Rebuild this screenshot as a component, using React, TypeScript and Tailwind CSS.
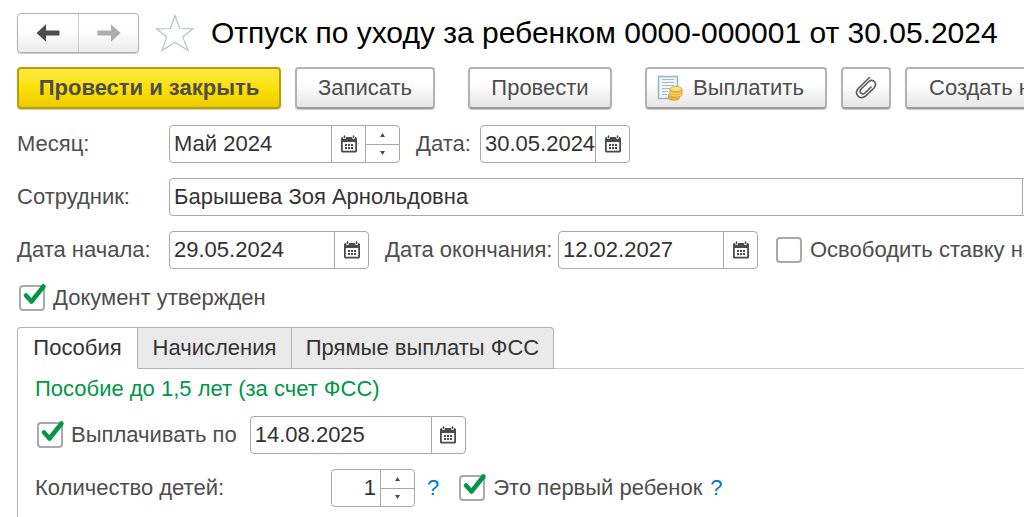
import { useId, useState } from 'react';
import type { ReactNode } from 'react';
import clsx from 'clsx';

const tabs = [
  { label: 'Пособия', width: 'w-[121px]' },
  { label: 'Начисления', width: 'w-[154px]' },
  { label: 'Прямые выплаты ФСС', width: 'w-[262px]' },
];

function ArrowIcon({ className }: { className?: string }) {
  return (
    <svg width="24" height="20" viewBox="0 0 24 20" fill="currentColor" className={className} aria-hidden="true">
      <path d="M0.5 10 10 1.2v6.300h13.500v5H10v6.300z" />
    </svg>
  );
}

function StarIcon() {
  return (
    <svg width="40" height="38" viewBox="0 0 40 38" fill="#fff" stroke="#b9c0c6" strokeWidth="1.2" aria-hidden="true">
      <path d="M20 1.5 24.7 14.5 38 14.8 27.6 23 33.2 36.5 20 28.2 7 36.5 11.6 23 1.5 14.8 15.3 14.5z" />
    </svg>
  );
}

function CalendarIcon() {
  return (
    <svg width="16" height="18" viewBox="0 0 16 18" className="shrink-0" aria-hidden="true">
      <path
        fill="#4a4a4a"
        fillRule="evenodd"
        d="M1.500 2h13a1.500 1.500 0 0 1 1.500 1.500V16a1.500 1.500 0 0 1-1.500 1.500h-13A1.500 1.500 0 0 1 0 16V3.500A1.500 1.500 0 0 1 1.500 2zM1.800 7v8.800h12.400V7z"
      />
      <path stroke="#fff" strokeWidth="3.200" strokeLinecap="round" d="M3.500 1v1.500M12.500 1v1.500" />
      <path stroke="#4a4a4a" strokeWidth="1.600" strokeLinecap="round" d="M3.500 1v1.500M12.500 1v1.500" />
      <path
        fill="#4a4a4a"
        d="M4 9h2v2H4zM7 9h2v2H7zM10 9h2v2h-2zM4 12h2v2H4zM7 12h2v2H7zM10 12h2v2h-2z"
      />
    </svg>
  );
}

function PayIcon() {
  return (
    <svg width="26" height="26" viewBox="0 0 26 26" aria-hidden="true">
      <path fill="#eff5f9" stroke="#94b5cc" strokeWidth="1.600" d="M1.500 1.500h19v22h-19z" />
      <path stroke="#a5b8c6" d="M5 4.500h12M5 7.500h12M5 10.500h12M5 13.500h8M5 16.500h6M5 19.500h5" />
      <g stroke="#d6a02e" strokeWidth="0.800">
        <path fill="#e9ae35" d="M11.500 20.500v2.500c0 3 11 3 11 0v-2.500z" />
        <ellipse cx="17" cy="20" rx="5.500" ry="2.200" fill="#ffd866" />
        <path fill="#edb53c" d="M13 14v5.500c0 3.500 12 3.500 12 0V14z" />
        <path fill="none" stroke="#ffe48a" d="M13.500 16.500c0 2.800 11 2.800 11 0M13.500 19c0 2.800 11 2.800 11 0" />
        <ellipse cx="19" cy="14" rx="6" ry="2.600" fill="#ffe078" />
      </g>
    </svg>
  );
}

function ClipIcon() {
  return (
    <svg
      width="22"
      height="24"
      viewBox="0 0 22 24"
      fill="none"
      stroke="#5a5a5a"
      strokeWidth="1.600"
      strokeLinecap="round"
      aria-hidden="true"
    >
      <path d="M14.500 1.500 3.200 12.500C-1 17 4 24.500 10 20.500L19 12c4-5-1-9.500-5-6.500L6.500 12.500c-3.500 3.500.5 7 3.500 4.500l6-6" />
    </svg>
  );
}

function ToolButton({ children, className, label }: { children: ReactNode; className?: string; label?: string }) {
  return (
    <button
      type="button"
      aria-label={label}
      className={clsx(
        'flex h-[42px] shrink-0 items-center rounded border-2 shadow-[0_1px_1px_#c8c8c8]',
        className,
      )}
    >
      {children}
    </button>
  );
}

const plainButton = 'border-[#b2b2b2] border-b-[#9b9b9b] bg-linear-to-b from-white from-40% to-[#e6e6e6] text-[#4d4d4d]';

type FieldProps = {
  id: string;
  value: string;
  className: string;
  calendar?: boolean;
  spinner?: boolean;
  picker?: boolean;
  alignRight?: boolean;
};

function Field({ id, value, className, calendar, spinner, picker, alignRight }: FieldProps) {
  const [text, setText] = useState(value);

  return (
    <div className={clsx('flex h-[38px] overflow-hidden rounded border border-[#a8a8a8] bg-white', className)}>
      <input
        id={id}
        type="text"
        value={text}
        onChange={(e) => setText(e.target.value)}
        className={clsx('w-0 min-w-0 flex-1 pl-1 text-[#333] outline-none', alignRight && 'pr-1 text-right')}
      />
      {calendar && (
        <button
          type="button"
          aria-label="Выбрать дату"
          className="flex w-[34px] items-center justify-center border-l border-[#a8a8a8]"
        >
          <CalendarIcon />
        </button>
      )}
      {spinner && (
        <div className="flex w-[34px] flex-col border-l border-[#a8a8a8]">
          <button
            type="button"
            aria-label="Увеличить"
            className="flex flex-1 items-center justify-center border-b border-[#a8a8a8]"
          >
            <svg width="5" height="4" viewBox="0 0 5 4" fill="#4a4a4a"><path d="M2.500 0 5 4H0z" /></svg>
          </button>
          <button type="button" aria-label="Уменьшить" className="flex flex-1 items-center justify-center">
            <svg width="5" height="4" viewBox="0 0 5 4" fill="#4a4a4a"><path d="M0 0h5L2.500 4z" /></svg>
          </button>
        </div>
      )}
      {picker && <button type="button" aria-label="Выбрать" className="w-[34px] border-l border-[#a8a8a8]" />}
    </div>
  );
}

function Checkbox({ label, checked = false }: { label: string; checked?: boolean }) {
  const id = useId();

  return (
    <div className="flex shrink-0 items-center gap-2 pl-0.5">
      <span className="relative flex">
        <input
          id={id}
          type="checkbox"
          defaultChecked={checked}
          className="peer size-[26px] appearance-none rounded border-2 border-[#a9a9a9] bg-white"
        />
        <svg
          width="30"
          height="26"
          viewBox="0 0 30 26"
          fill="none"
          stroke="#009646"
          strokeWidth="4.500"
          strokeLinecap="round"
          strokeLinejoin="round"
          className="pointer-events-none absolute -top-1 left-0 hidden peer-checked:block"
        >
          <path d="M7 14.500 12.500 20.500 24.500 5.500" />
        </svg>
      </span>
      <label htmlFor={id}>{label}</label>
    </div>
  );
}

export default function App() {
  const [active, setActive] = useState(0);

  return (
    <main className="flex min-h-screen flex-col overflow-hidden bg-white pt-[13px] pl-[17px] font-['Liberation_Sans',Arial,sans-serif] text-[22px] leading-7 whitespace-nowrap text-[#4d4d4d]">
      {/* Title */}
      <header className="flex h-10 items-center">
        <div className="flex h-10 shrink-0 rounded border border-[#b2b2b2] bg-linear-to-b from-white from-40% to-[#ececec] shadow-[0_1px_1px_#c8c8c8]">
          <button type="button" aria-label="Назад" className="flex w-[60px] items-center justify-center">
            <ArrowIcon />
          </button>
          <button
            type="button"
            aria-label="Вперед"
            className="flex w-[60px] items-center justify-center border-l border-[#d0d0d0] text-[#adadad]"
          >
            <ArrowIcon className="rotate-180" />
          </button>
        </div>
        <button type="button" aria-label="В избранное" className="ml-4 shrink-0">
          <StarIcon />
        </button>
        <h1 className="ml-4 text-[30px] leading-10 text-black">
          Отпуск по уходу за ребенком 0000-000001 от 30.05.2024
        </h1>
      </header>

      {/* Commands */}
      <div className="mt-[14px] flex gap-[14px]">
        <ToolButton className="w-[264px] justify-center border-[#b59d0b] bg-linear-to-b from-[#ffe93d] via-[#fde000] to-[#e9cc00] font-bold text-[#4d4d4d]">
          Провести и закрыть
        </ToolButton>
        <ToolButton className={clsx(plainButton, 'w-[140px] justify-center')}>Записать</ToolButton>
        <ToolButton className={clsx(plainButton, 'ml-[19px] w-[144px] justify-center')}>Провести</ToolButton>
        <ToolButton className={clsx(plainButton, 'ml-[19px] w-[182px] gap-[10px] pl-[10px]')}>
          <PayIcon />
          Выплатить
        </ToolButton>
        <ToolButton className={clsx(plainButton, 'w-[50px] justify-center')} label="Присоединенные файлы">
          <ClipIcon />
        </ToolButton>
        <ToolButton className={clsx(plainButton, 'px-[22px]')}>Создать на основании</ToolButton>
      </div>

      {/* Document fields */}
      <div className="mt-4 flex flex-col gap-[15px]">
        <div className="flex items-center">
          <label htmlFor="month" className="w-[152px] shrink-0">Месяц:</label>
          <Field id="month" value="Май 2024" className="w-[231px]" calendar spinner />
          <label htmlFor="date" className="ml-4 w-[64px] shrink-0">Дата:</label>
          <Field id="date" value="30.05.2024" className="w-[150px]" calendar />
        </div>
        <div className="-mr-[33px] flex items-center">
          <label htmlFor="employee" className="w-[152px] shrink-0">Сотрудник:</label>
          <Field id="employee" value="Барышева Зоя Арнольдовна" className="flex-1" picker />
        </div>
        <div className="flex items-center">
          <label htmlFor="start" className="w-[152px] shrink-0">Дата начала:</label>
          <Field id="start" value="29.05.2024" className="w-[200px] shrink-0" calendar />
          <label htmlFor="end" className="ml-4 w-[173px] shrink-0">Дата окончания:</label>
          <Field id="end" value="12.02.2027" className="mr-4 w-[200px] shrink-0" calendar />
          <Checkbox label="Освободить ставку на период отпуска" />
        </div>
        <Checkbox label="Документ утвержден" checked />
      </div>

      {/* Tabs */}
      <div role="tablist" className="mt-[15px] flex">
        {tabs.map((tab, i) => (
          <button
            key={tab.label}
            type="button"
            role="tab"
            aria-selected={i === active}
            onClick={() => setActive(i)}
            className={clsx(
              'h-[42px] border-y border-r border-[#b2b2b2] text-[#333]',
              tab.width,
              i === 0 && 'rounded-tl border-l',
              i === tabs.length - 1 && 'rounded-tr',
              i === active ? 'border-b-white bg-white' : 'bg-[#eaeaea]',
            )}
          >
            {tab.label}
          </button>
        ))}
        <div className="flex-1 border-b border-[#c8c8c8]" />
      </div>
      <section className="flex flex-1 flex-col border-l border-[#b2b2b2] pt-[6px] pb-2 pl-[17px]">
        <h2 className="text-[#009646]">Пособие до 1,5 лет (за счет ФСС)</h2>
        <div className="mt-[13px] flex items-center gap-[13px]">
          <Checkbox label="Выплачивать по" checked />
          <Field id="payUntil" value="14.08.2025" className="w-[216px]" calendar />
        </div>
        <div className="mt-[15px] flex items-center">
          <label htmlFor="children" className="w-[296px]">Количество детей:</label>
          <Field id="children" value="1" className="w-[84px]" spinner alignRight />
          <a href="#children" className="mx-3 text-[#0078c8]">?</a>
          <div className="ml-[6px] flex items-center">
            <Checkbox label="Это первый ребенок" checked />
            <a href="#first" className="ml-2 text-[#0078c8]">?</a>
          </div>
        </div>
      </section>
    </main>
  );
}
